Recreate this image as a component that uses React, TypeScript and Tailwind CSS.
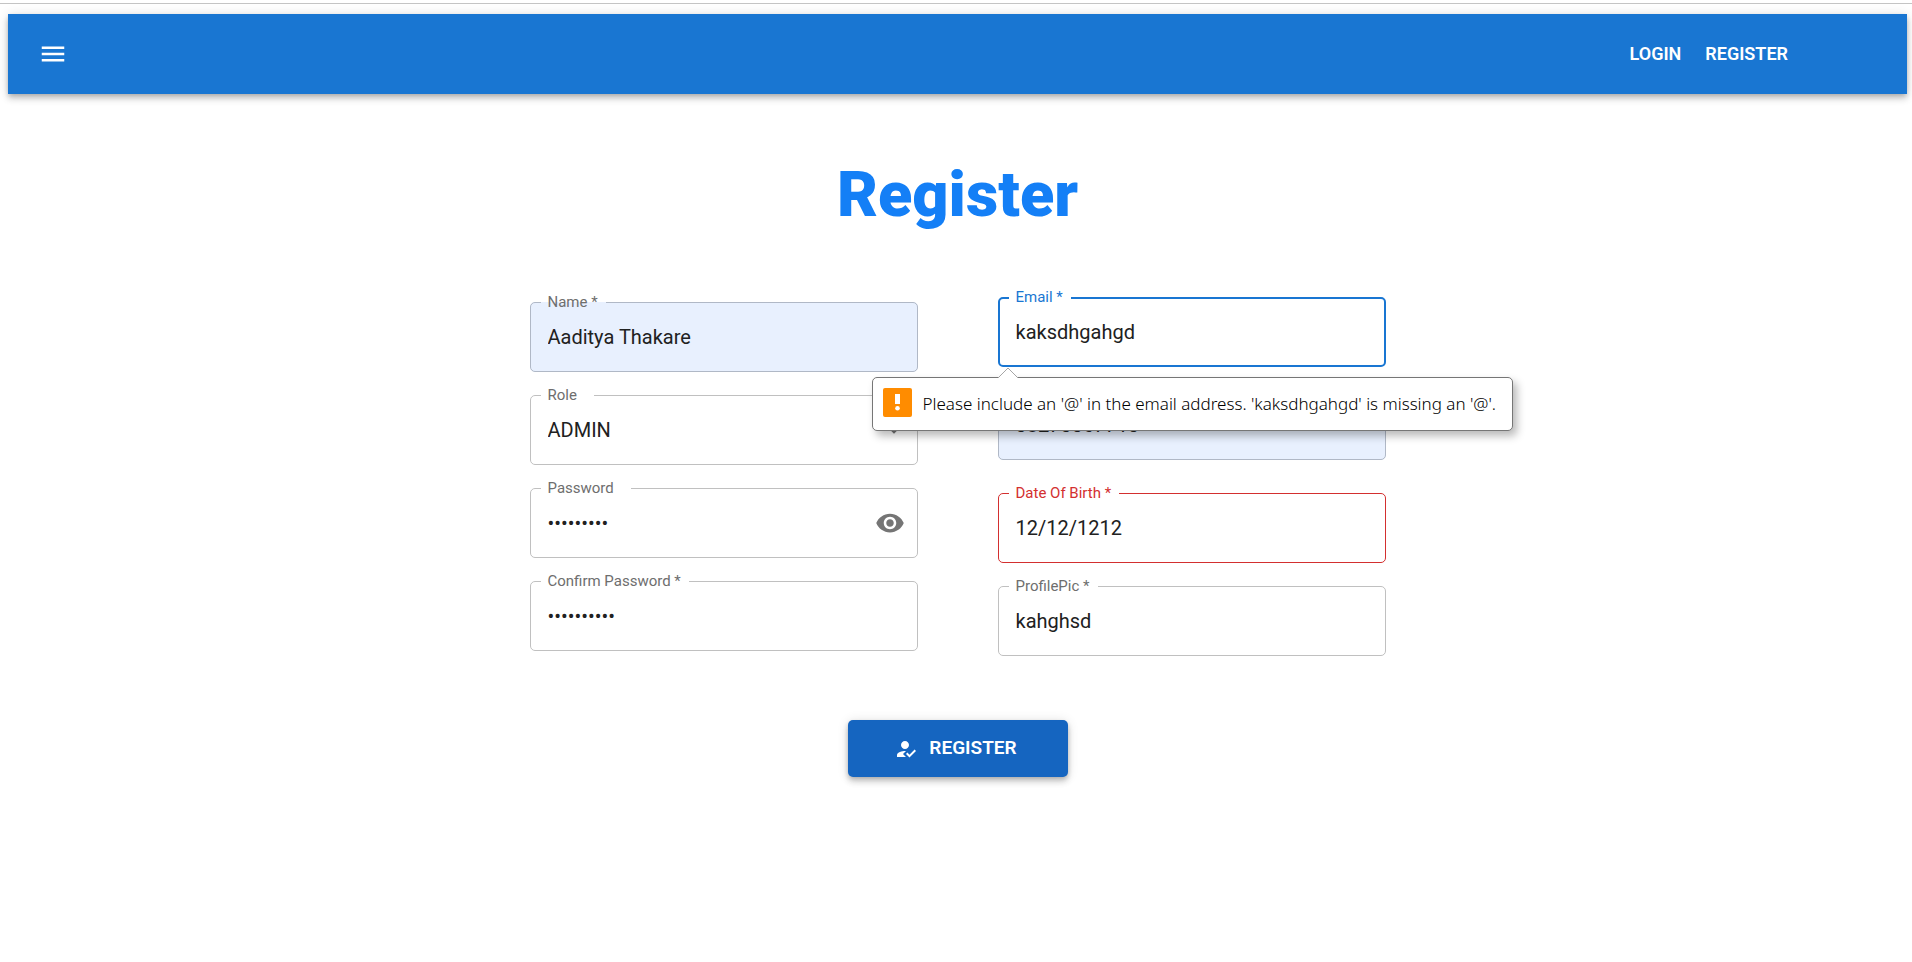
import type { ReactNode } from 'react';
import { MdArrowDropDown, MdHowToReg, MdMenu, MdVisibility } from 'react-icons/md';

type Tone = 'normal' | 'filled' | 'error' | 'focused';

const frameTone: Record<Tone, string> = {
  normal: 'border border-[#c0c0c0]',
  filled: 'border border-[#b0b8c6] bg-[#e8f0fe]',
  error: 'border border-[#d32f2f]',
  focused: 'border-2 border-[#1976d2]',
};

const labelTone: Record<Tone, string> = {
  normal: 'text-[#6e6e6e]',
  filled: 'text-[#6e6e6e]',
  error: 'text-[#d32f2f]',
  focused: 'text-[#1976d2]',
};

const control =
  'h-12 min-w-0 flex-1 appearance-none bg-transparent text-xl text-[#212121] outline-none';

interface FieldProps {
  id: string;
  label: string;
  tone?: Tone;
  wide?: boolean;
  children: ReactNode;
}

function Field({ id, label, tone = 'normal', wide = false, children }: FieldProps) {
  const focused = tone === 'focused';
  return (
    <fieldset className={`min-w-0 rounded-[5px] pb-[10px] ${focused ? 'px-[9px]' : 'px-[10px]'} ${frameTone[tone]}`}>
      <legend className={`pl-[7px] ${wide ? 'pr-[17px]' : 'pr-2'}`}>
        <label
          htmlFor={id}
          className={`block text-[15px] ${focused ? 'pb-[2px] leading-5' : 'leading-[21px]'} ${labelTone[tone]}`}
        >
          {label}
        </label>
      </legend>
      <div className={`flex items-center pl-[7px] ${focused ? 'h-[46px]' : 'h-12'}`}>{children}</div>
    </fieldset>
  );
}

function ValidationBubble({ text }: { text: string }) {
  return (
    <div
      role="alert"
      className="absolute top-[90px] -left-[126px] z-10 flex h-[54px] min-w-[641px] items-center gap-[11px] rounded-[5px] border border-[#767676] bg-white pr-[11px] pl-[10px] whitespace-nowrap shadow-[4px_5px_8px_rgba(0,0,0,0.28)]"
    >
      <svg className="absolute -top-[11px] left-[125px] h-[12px] w-5" viewBox="0 0 20 12" aria-hidden="true">
        <path d="M0 11 10 1 20 11V12H0Z" fill="#fff" />
        <path d="M0 11 10 1 20 11" fill="none" stroke="#a6a6a6" />
      </svg>
      <svg className="-mt-1 size-[29px]" viewBox="0 0 29 29" aria-hidden="true">
        <rect width="29" height="29" rx="2" fill="#ff8c00" />
        <rect x="12" y="6" width="5" height="10" fill="#fff" />
        <circle cx="14.5" cy="20.3" r="2.3" fill="#fff" />
      </svg>
      <span className="font-['Noto_Sans','Open_Sans',sans-serif] text-[17px] font-light text-black">{text}</span>
    </div>
  );
}

export default function App() {
  return (
    <div className="min-h-screen bg-white pt-[3px] font-[Roboto,sans-serif]">
      <div className="border-t border-[#c4c4c4] pt-[10px] pr-[5px] pl-2">
        <header className="flex h-20 items-center justify-between bg-[#1976d2] pr-[119px] pl-[30px] text-white shadow-[0_2px_5px_-1px_rgba(0,0,0,0.2),0_5px_6px_rgba(0,0,0,0.14),0_1px_12px_rgba(0,0,0,0.12)]">
          <button type="button" aria-label="Open menu">
            <MdMenu className="size-[30px]" />
          </button>
          <nav className="flex gap-6 text-lg font-semibold">
            <a href="#login">LOGIN</a>
            <a href="#register">REGISTER</a>
          </nav>
        </header>

        <main className="flex flex-col items-center pt-[61px] pb-10">
          <h1 className="text-[63px] leading-20 font-black text-[#147ff6]">Register</h1>

          <form noValidate className="mt-[52px] flex w-full max-w-[856px] flex-col items-center">
            <div className="grid w-full grid-cols-2 gap-x-20">
              <div className="flex flex-col gap-[13px] pt-[5px]">
                <Field id="name" label="Name *" tone="filled">
                  <input id="name" type="text" defaultValue="Aaditya Thakare" className={control} />
                </Field>
                <Field id="role" label="Role" wide>
                  <select id="role" defaultValue="ADMIN" className={control}>
                    <option>ADMIN</option>
                    <option>USER</option>
                  </select>
                  <MdArrowDropDown className="-mr-[2px] size-[30px] text-[#757575]" />
                </Field>
                <Field id="password" label="Password" wide>
                  <input id="password" type="password" defaultValue="pass12345" className={control} />
                  <button type="button" aria-label="Show password" className="mr-[2px] text-[#757575]">
                    <MdVisibility className="size-[30px]" />
                  </button>
                </Field>
                <Field id="confirm" label="Confirm Password *">
                  <input id="confirm" type="password" defaultValue="pass123456" className={control} />
                </Field>
              </div>

              <div className="flex flex-col gap-[13px]">
                <div className="relative">
                  <Field id="email" label="Email *" tone="focused">
                    <input id="email" type="email" defaultValue="kaksdhgahgd" className={control} />
                  </Field>
                  <ValidationBubble text="Please include an '@' in the email address. 'kaksdhgahgd' is missing an '@'." />
                </div>
                <Field id="phone" label="Phone *" tone="filled">
                  <input id="phone" type="tel" defaultValue="08270067710" className={control} />
                </Field>
                <div className="pt-[10px]">
                  <Field id="dob" label="Date Of Birth *" tone="error">
                    <input id="dob" type="text" defaultValue="12/12/1212" className={control} />
                  </Field>
                </div>
                <Field id="pic" label="ProfilePic *">
                  <input id="pic" type="text" defaultValue="kahghsd" className={control} />
                </Field>
              </div>
            </div>

            <button
              type="submit"
              className="mt-16 flex h-[57px] w-[220px] items-center justify-center gap-[11px] rounded-[5px] bg-[#1565c0] pr-1 text-[19px] font-semibold text-white shadow-[0_2px_5px_-1px_rgba(0,0,0,0.2),0_5px_6px_rgba(0,0,0,0.14),0_1px_12px_rgba(0,0,0,0.12)]"
            >
              <MdHowToReg className="size-6" />
              REGISTER
            </button>
          </form>
        </main>
      </div>
    </div>
  );
}
